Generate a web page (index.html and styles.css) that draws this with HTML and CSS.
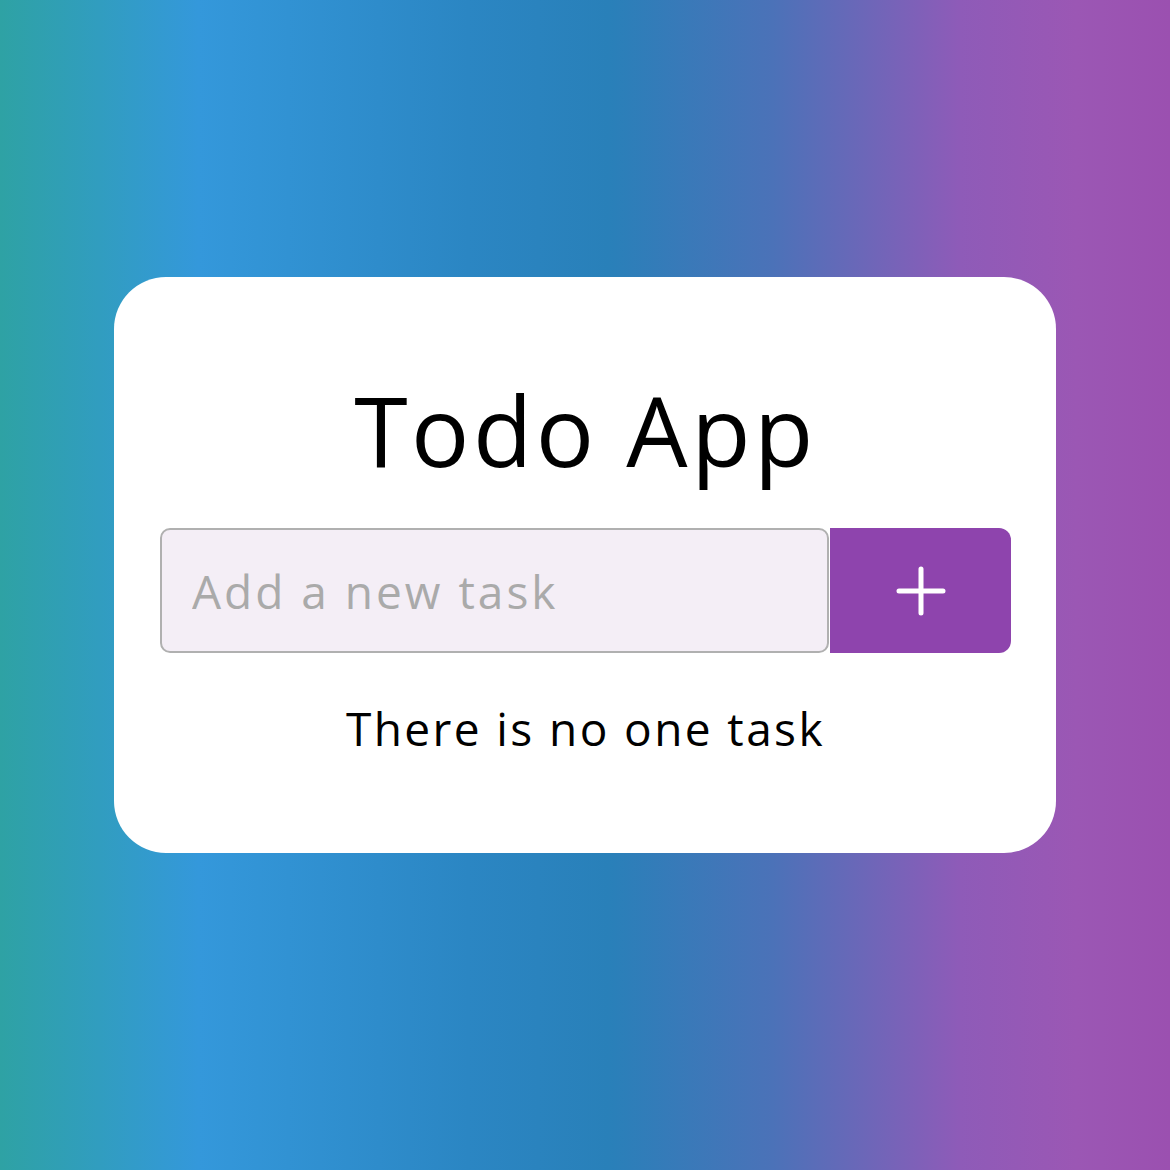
FILE: index.html
```html
<!DOCTYPE html>
<html lang="en">
<head>
<meta charset="utf-8">
<title>Todo App</title>
<link rel="stylesheet" href="styles.css">
</head>
<body>
<main class="card">
  <h1 class="title">Todo App</h1>
  <form class="add-row">
    <input class="task-input" type="text" placeholder="Add a new task">
    <button class="add-btn" type="button" aria-label="Add">
      <svg width="50" height="50" viewBox="0 0 50 50"><path d="M25 3V47M3 25H47" stroke="#fff" stroke-width="5" stroke-linecap="round" fill="none"/></svg>
    </button>
  </form>
  <p class="empty">There is no one task</p>
</main>
</body>
</html>
```
FILE: styles.css
```css
* { box-sizing: border-box; }
html, body { height: 100%; }
body {
  margin: 0;
  font-family: "Open Sans", "DejaVu Sans", sans-serif;
  background: linear-gradient(to right, #2ea2a4 0%, #3498db 17%, #2b86c3 40%, #2980b9 52%, #4b72b8 66%, #8e5bb8 82%, #9b57b4 92%, #9b50b0 100%);
  display: flex;
  justify-content: center;
  align-items: flex-start;
  padding-top: 277px;
}
.card {
  width: 942px;
  height: 576px;
  background: #fff;
  border-radius: 52px;
  padding: 104px 45px 0 46px;
  display: flex;
  flex-direction: column;
  align-items: center;
}
.title {
  margin: 0;
  font-weight: 400;
  font-size: 97px;
  line-height: 1;
  letter-spacing: 3.5px;
  color: #000;
}
.add-row {
  margin-top: 50px;
  width: 100%;
  display: flex;
  height: 125px;
}
.task-input {
  flex: 1;
  height: 100%;
  border: 2px solid #b0b0b0;
  border-radius: 10px;
  background: #f4eef6;
  padding: 0 30px;
  font-family: inherit;
  font-size: 46px;
  letter-spacing: 3px;
  color: #000;
  outline: none;
}
.task-input::placeholder { color: #aaa; }
.add-btn {
  width: 181px;
  margin-left: 1px;
  height: 100%;
  border: none;
  border-radius: 0 12px 12px 0;
  background: #8e44ad;
  display: flex;
  align-items: center;
  justify-content: center;
  padding: 0;
}
.empty {
  margin: 48px 0 0;
  font-size: 46px;
  line-height: 1.2;
  letter-spacing: 2.4px;
  color: #000;
}
```
